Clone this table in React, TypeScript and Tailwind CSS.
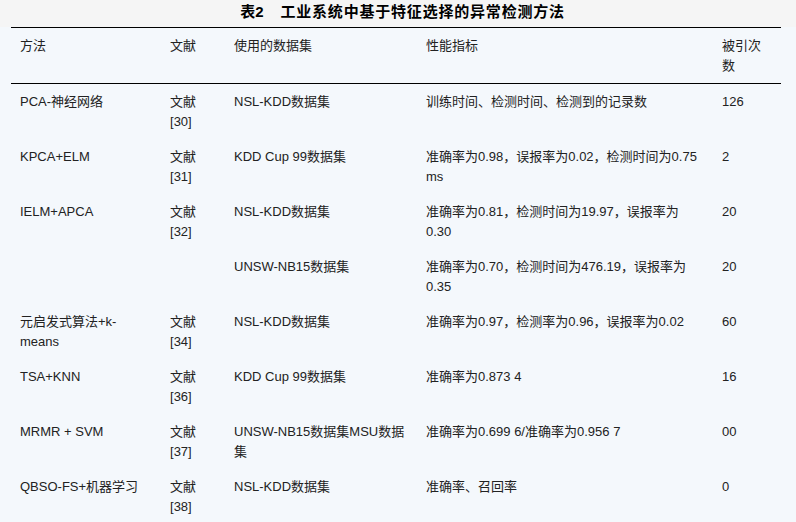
const rows = [
  { method: "PCA-神经网络", ref: "30", data: "NSL-KDD数据集", metric: "训练时间、检测时间、检测到的记录数", cited: "126" },
  { method: "KPCA+ELM", ref: "31", data: "KDD Cup 99数据集", metric: "准确率为0.98，误报率为0.02，检测时间为0.75 ms", cited: "2" },
  { method: "IELM+APCA", ref: "32", data: "NSL-KDD数据集", metric: "准确率为0.81，检测时间为19.97，误报率为0.30", cited: "20", span: 2 },
  { method: null, ref: null, data: "UNSW-NB15数据集", metric: "准确率为0.70，检测时间为476.19，误报率为0.35", cited: "20" },
  { method: "元启发式算法+k-means", ref: "34", data: "NSL-KDD数据集", metric: "准确率为0.97，检测率为0.96，误报率为0.02", cited: "60" },
  { method: "TSA+KNN", ref: "36", data: "KDD Cup 99数据集", metric: "准确率为0.873 4", cited: "16" },
  { method: "MRMR + SVM", ref: "37", data: "UNSW-NB15数据集MSU数据集", metric: "准确率为0.699 6/准确率为0.956 7", cited: "00" },
  { method: "QBSO-FS+机器学习", ref: "38", data: "NSL-KDD数据集", metric: "准确率、召回率", cited: "0" },
]

const cell = "align-top pl-[9px] pr-[9px] pt-[8px] pb-[8px]"

export default function App() {
  return (
    <div
      className="w-[796px] h-[522px] overflow-hidden bg-[#f4f8fc] text-[13px] leading-[19.5px] text-[#222]"
      style={{ fontFamily: '"Liberation Sans", "Noto Sans CJK SC", sans-serif' }}
    >
      <div className="h-[27px] bg-[#f5f5f5] flex items-center justify-center pl-[9px] pb-[3px]">
        <span className="text-[15px] leading-[20px] font-bold text-black whitespace-nowrap">
          表2<span className="ml-[17px] tracking-[0.8px]">工业系统中基于特征选择的异常检测方法</span>
        </span>
      </div>
      <table className="ml-[11px] w-[770px] table-fixed border-collapse">
        <colgroup>
          <col className="w-[150px]" />
          <col className="w-[64px]" />
          <col className="w-[192px]" />
          <col className="w-[296px]" />
          <col className="w-[68px]" />
        </colgroup>
        <thead>
          <tr className="border-t border-b border-black text-left">
            <th className={`${cell} font-normal`}>方法</th>
            <th className={`${cell} font-normal`}>文献</th>
            <th className={`${cell} font-normal`}>使用的数据集</th>
            <th className={`${cell} font-normal`}>性能指标</th>
            <th className={`${cell} font-normal`}>被引次<br />数</th>
          </tr>
        </thead>
        <tbody>
          {rows.map((r, i) => (
            <tr key={i}>
              {r.method !== null && (
                <td rowSpan={r.span ?? 1} className={cell}>{r.method}</td>
              )}
              {r.ref !== null && (
                <td rowSpan={r.span ?? 1} className={cell}>
                  <div>文献</div>
                  <div>[{r.ref}]</div>
                </td>
              )}
              <td className={cell}>{r.data}</td>
              <td className={cell}>{r.metric}</td>
              <td className={cell}>{r.cited}</td>
            </tr>
          ))}
        </tbody>
      </table>
    </div>
  )
}
